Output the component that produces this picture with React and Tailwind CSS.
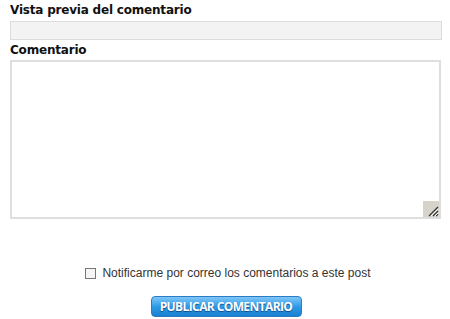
export default function App() {
  return (
    <div className="w-[450px] h-[319px] bg-white overflow-hidden" style={{ fontFamily: '"DejaVu Sans", sans-serif' }}>
      <div className="pl-[10px] pr-[8px] pt-[2px]">
        <h3 className="text-[12px] font-bold leading-[16px] text-[#111] tracking-[-0.2px]">Vista previa del comentario</h3>
        <div className="mt-[3px] h-[19px] w-[432px] border border-[#dcdcdc] bg-[#f3f3f3]" />
        <h3 className="mt-[2px] text-[12px] font-bold leading-[17px] text-[#111] tracking-[-0.2px]">Comentario</h3>
        <div className="relative mt-[1px] h-[159px] w-[431px] border-2 border-[#dedede] bg-white">
          <div className="absolute right-0 bottom-0 h-[16px] w-[16px]">
            <svg width="16" height="16" viewBox="0 0 16 16">
              <rect width="16" height="16" fill="#d6d3c9" />
              <path d="M15 6L6 15M15 10L10 15M15 13L13 15" stroke="#333" strokeWidth="1.2" />
              <path d="M15 8L8 15M15 12L12 15" stroke="#fff" strokeWidth="1" />
            </svg>
          </div>
        </div>
      </div>
      <div className="mt-[45px] flex items-center justify-center gap-[6px] pl-[6px]" style={{ fontFamily: '"Liberation Sans", Arial, sans-serif' }}>
        <span className="h-[11px] w-[11px] border border-[#777] bg-[#f5f5f5]" />
        <span className="text-[12px] text-[#333]">Notificarme por correo los comentarios a este post</span>
      </div>
      <div className="mt-[14px] flex justify-center pl-[2px]">
        <button
          className="h-[21px] w-[151px] rounded-[4px] border border-[#2b7cc4] bg-gradient-to-b from-[#7cc6f7] via-[#2d9be8] to-[#1a7fd0] text-[12px] font-bold leading-[19px] tracking-[-0.6px] text-white [text-shadow:0_1px_1px_#0b4a86]"
          style={{ fontFamily: '"Open Sans", sans-serif' }}
        >
          PUBLICAR COMENTARIO
        </button>
      </div>
    </div>
  );
}
